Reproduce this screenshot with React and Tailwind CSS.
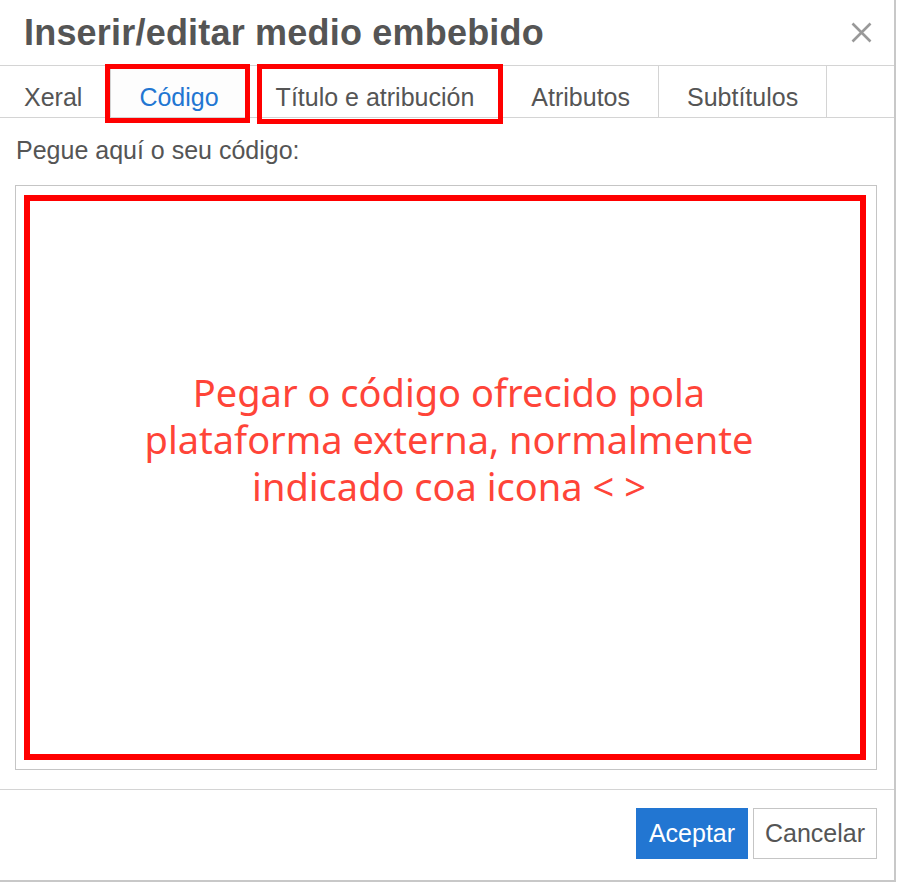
import React, { useState } from 'react';

const tabs = ['Xeral', 'Código', 'Título e atribución', 'Atributos', 'Subtítulos'];

const App = () => {
  const [active, setActive] = useState(1);

  return (
    <div className="w-[898px] h-[882px] bg-white font-['Liberation_Sans',Arial,sans-serif] text-[#555]">
      <div className="relative w-[896px] h-[882px] border-r-2 border-b-2 border-[#c8c8c8] flex flex-col">
        {/* Header */}
        <div className="h-[66px] border-b border-[#d4d4d4] flex items-center justify-between pl-[24px] pr-[22px]">
          <h1 className="text-[36px] leading-[40px] font-bold text-[#555] tracking-[0.2px]">Inserir/editar medio embebido</h1>
          <button className="w-[21px] h-[21px] text-[#999]">
            <svg viewBox="0 0 21 21" width="21" height="21">
              <path d="M1.5 1.5L19.5 19.5M19.5 1.5L1.5 19.5" stroke="currentColor" strokeWidth="2.6" />
            </svg>
          </button>
        </div>

        {/* Tabs */}
        <div className="h-[52px] border-b border-[#d4d4d4] flex ml-[-4px]">
          {tabs.map((t, i) => (
            <button
              key={t}
              onClick={() => setActive(i)}
              className={`h-full px-[28px] pt-[11px] border-r border-[#d4d4d4] text-[25px] leading-[30px] self-start ${
                i === active ? 'bg-[#fdfdfd] text-[#2276d2]' : 'text-[#555]'
              }`}
            >
              {t}
            </button>
          ))}
        </div>

        {/* annotation boxes */}
        <div className="absolute left-[105px] top-[64px] w-[145px] h-[59px] border-[5px] border-[#ff0000]" />
        <div className="absolute left-[257px] top-[64px] w-[246px] h-[60px] border-[5px] border-[#ff0000]" />

        {/* Body */}
        <div className="pl-[15px] pr-[17px] pt-[17px]">
          <label className="block pl-[1px] text-[25px] leading-[30px] text-[#555]">Pegue aquí o seu código:</label>
          <div className="mt-[20px] h-[585px] border border-[#c5c5c5] pt-[9px] pb-[9px] pl-[8px] pr-[10px]">
            <div className="h-full border-[6px] border-[#ff0000] flex items-center justify-center pb-[77px] pl-[8px]">
              <div className="text-center text-[38px] text-[#ff4438] font-['Noto_Sans',sans-serif]">
                <p className="h-[47px] leading-[47px]">Pegar o código ofrecido pola</p>
                <p className="h-[47px] leading-[47px]">plataforma externa, normalmente</p>
                <p className="h-[47px] leading-[47px]">indicado coa icona &lt; &gt;</p>
              </div>
            </div>
          </div>
        </div>

        {/* Footer */}
        <div className="mt-[19px] border-t border-[#d4d4d4] flex justify-end gap-[5px] pt-[18px] pr-[17px]">
          <button className="w-[112px] h-[51px] bg-[#2276d2] text-white text-[25px]">Aceptar</button>
          <button className="w-[124px] h-[51px] border border-[#c5c5c5] bg-white text-[#555] text-[25px]">Cancelar</button>
        </div>
      </div>
    </div>
  );
};

export default App;
